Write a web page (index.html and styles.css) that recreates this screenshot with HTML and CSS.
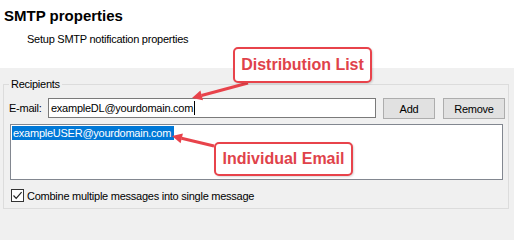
FILE: index.html
```html
<!DOCTYPE html>
<html>
<head>
<meta charset="utf-8">
<link rel="stylesheet" href="styles.css">
</head>
<body>
<div class="page">
  <div class="header">
    <div class="title">SMTP properties</div>
    <div class="subtitle">Setup SMTP notification properties</div>
  </div>
  <fieldset class="group">
    <legend class="legend">Recipients</legend>
    <div class="row">
      <span class="label">E-mail:</span>
      <div class="textbox"><span>exampleDL@yourdomain.com</span><span class="caret"></span></div>
      <button class="btn btn-add">Add</button>
      <button class="btn btn-remove">Remove</button>
    </div>
    <div class="listbox">
      <div class="item"><span class="selected">exampleUSER@yourdomain.com</span></div>
    </div>
    <div class="check-row">
      <span class="checkbox"><svg width="11" height="11" viewBox="0 0 11 11"><path d="M1.5 5.5 L4.2 8.3 L9.6 2.2" fill="none" stroke="#222" stroke-width="1.2"/></svg></span>
      <span>Combine multiple messages into single message</span>
    </div>
  </fieldset>

  <svg class="arrows" width="514" height="214" viewBox="0 0 514 214">
    <line x1="248" y1="83" x2="201.5" y2="95.5" stroke="#e8434b" stroke-width="3"/>
    <polygon points="192,98 203,100.2 200.4,90.6" fill="#e8434b"/>
    <line x1="214" y1="146" x2="181.5" y2="138.3" stroke="#e8434b" stroke-width="3"/>
    <polygon points="172,136 182.9,133.4 180.6,143.2" fill="#e8434b"/>
  </svg>
  <div class="callout callout-dl">Distribution List</div>
  <div class="callout callout-ind">Individual Email</div>
</div>
</body>
</html>
```

FILE: styles.css
```css
html, body {
  margin: 0;
  padding: 0;
}
body {
  background: #f0f0f0;
  font-family: "Liberation Sans", Arial, sans-serif;
  font-size: 11px;
  letter-spacing: -0.25px;
  color: #000;
}
.page {
  position: relative;
  width: 514px;
  height: 214px;
  overflow: hidden;
}
.header {
  background: #fff;
  height: 68px;
  box-sizing: border-box;
  padding-top: 7px;
}
.title {
  font-weight: bold;
  font-size: 15px;
  line-height: 18px;
  letter-spacing: 0;
  padding-left: 4px;
}
.subtitle {
  margin-top: 7px;
  line-height: 14px;
  padding-left: 27px;
}
.group {
  margin: 9px 5px 0 3px;
  border: 1px solid #dcdcdc;
  padding: 7px 3px 6px 5px;
  min-width: 0;
}
.legend {
  padding: 0 2px;
  line-height: 14px;
}
.row {
  display: flex;
  align-items: flex-start;
  height: 21px;
}
.label {
  width: 39px;
  line-height: 20px;
}
.textbox {
  flex: 1;
  height: 20px;
  box-sizing: border-box;
  border: 1px solid #7a7a7a;
  background: #fff;
  padding-left: 2px;
  line-height: 18px;
  display: flex;
  align-items: center;
}
.caret {
  display: inline-block;
  width: 1px;
  height: 14px;
  background: #000;
  margin-left: 1px;
}
.btn {
  font: inherit;
  letter-spacing: inherit;
  height: 21px;
  box-sizing: border-box;
  border: 1px solid #adadad;
  background: #e1e1e1;
  padding: 0;
  color: #000;
}
.btn-add {
  width: 52px;
  margin-left: 7px;
}
.btn-remove {
  width: 62px;
  margin-left: 8px;
}
.listbox {
  margin: 5px 2px 0 1px;
  height: 56px;
  box-sizing: border-box;
  border: 1px solid #828790;
  background: #fff;
  padding: 1px;
}
.item {
  line-height: 14px;
}
.selected {
  display: inline-block;
  background: #0078d7;
  color: #fff;
  padding: 0 3px 0 1px;
}
.check-row {
  display: flex;
  align-items: center;
  margin-top: 9px;
  margin-left: 2px;
  height: 13px;
  gap: 3px;
}
.checkbox {
  width: 13px;
  height: 13px;
  box-sizing: border-box;
  border: 1px solid #333;
  background: #fff;
  display: flex;
  align-items: center;
  justify-content: center;
}
.checkbox svg {
  display: block;
}
.arrows {
  position: absolute;
  left: 0;
  top: 0;
  pointer-events: none;
}
.callout {
  position: absolute;
  box-sizing: border-box;
  width: 139px;
  border: 2px solid #e8434b;
  border-radius: 5px;
  background: #fff;
  color: #e0424a;
  font-weight: bold;
  font-size: 16px;
  letter-spacing: 0;
  display: flex;
  align-items: center;
  justify-content: center;
  box-shadow: 1px 1px 2px rgba(0, 0, 0, 0.15);
}
.callout-dl {
  left: 233px;
  top: 47px;
  height: 36px;
}
.callout-ind {
  left: 214px;
  top: 142px;
  height: 34px;
}
```
